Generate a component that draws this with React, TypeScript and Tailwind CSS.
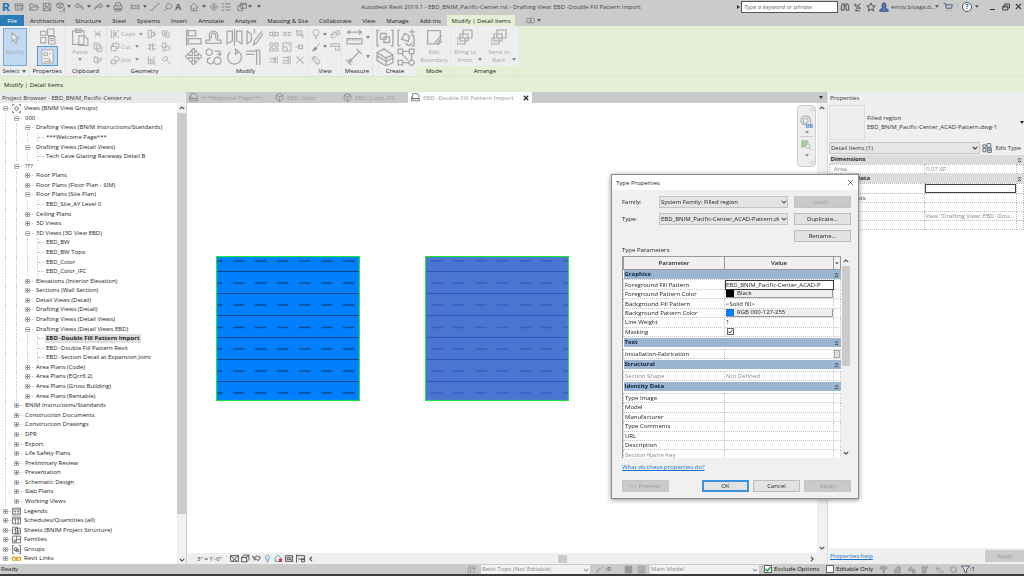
import React from "react";

type IconProps = {
  d: string;
  fill?: string;
  className?: string;
  sw?: number;
  extra?: React.ReactNode;
};

const Icon = ({ d, fill = "none", className = "h-[10px] w-[10px]", sw = 1.4, extra }: IconProps) => (
  <svg viewBox="0 0 16 16" fill={fill} stroke="currentColor" strokeWidth={sw} className={`shrink-0 ${className}`} aria-hidden="true">
    <path d={d} />
    {extra}
  </svg>
);

const Caret = ({ className = "text-[#666]" }: { className?: string }) => (
  <svg viewBox="0 0 4 3" className={`h-[3px] w-[4px] shrink-0 ${className}`} aria-hidden="true">
    <path d="M0 0h4L2 3z" fill="currentColor" />
  </svg>
);

const Chevron = ({ className = "" }: { className?: string }) => (
  <svg viewBox="0 0 8 8" className={`h-[6px] w-[6px] shrink-0 ${className}`} fill="none" stroke="currentColor" strokeWidth="1.4" aria-hidden="true">
    <path d="M1 2.5l3 3 3-3" />
  </svg>
);

const Collapse = () => (
  <svg viewBox="0 0 6 8" className="h-[6px] w-[5px] shrink-0" fill="none" stroke="#222" strokeWidth="1.2" aria-hidden="true">
    <path d="M1 3.5L3 1.5l2 2M1 7l2-2 2 2" />
  </svg>
);

const paths = {
  recent: "M2 3h12v10H2zM2 5.5h12M6 5.5V13M9 8h4M9 10.5h4",
  open: "M1.5 13V3h4l1.5 2h6v3M1.5 13l3-5h11l-3 5z",
  save: "M2 2h11l1 1v11H2zM5 2v5h6V2M4.500 14V9.500h7V14",
  sync: "M8 1l5 2v5l-5 2-5-2V3zM3 3l5 2 5-2M8 5v5M8 14a3.500 3.500 0 107-2M15 9v3h-3",
  undo: "M6 2L1.500 6 6 10V7.500c4 0 7 .5 8.500 4C14.500 7 11 4.500 6 4.500z",
  redo: "M10 2l4.500 4L10 10V7.500c-4 0-7 .5-8.500 4C1.500 7 5 4.500 10 4.500z",
  print: "M4 6V1.500h8V6M1.500 6h13v6h-13zM4 10h8v4.500H4z",
  dims: "M2 4v8M14 4v8M2 6h12M2 10h12",
  line: "M2.500 13.500L13.500 2.500M1 12l3 3M12 1l3 3",
  tag: "M2 14l4-4M6 10a4.500 4.500 0 118 -3c0 3-3 4-5 4z",
  home: "M1.500 8L8 2l6.500 6M3.500 7v7h9V7M7 14v-4h3",
  section: "M8 2l6 6-6 6-6-6zM8 5v6M5 8h6",
  list: "M1 3h4M7 3h8M1 8h4M7 8h8M1 13h4M7 13h8",
  windows: "M5 2h10v8H5zM1.500 6H9v8H1.500zM5 4h10",
  binoc: "M2 8l1.500-5h3V13H2zM14 8l-1.500-5h-3V13H14zM6.500 6h3",
  dish: "M3 3c0 5 4 8 9 7zM8 7l4-5M6 10l-2 4h7",
  star: "M8 1.500l2 4.500 4.800.4-3.700 3.200 1.200 4.800L8 11.800l-4.300 2.600 1.200-4.800L1.200 6.400 6 6z",
  cart: "M1 2h2.500l2 8h8L15 4.500H4.500M6 13.500h1M12 13.500h1",
  cut: "M2 3l11 10M13 3L2 13M3 8h9",
  copy: "M2 2h7l2 2v7H2zM6 5h5l3 3v7H6z",
  match: "M2 3h5v9H2zM8 6h6M8 9h4M7 14l8-9",
  cope: "M2 1v14M6 1v14M14 2L7 8l7 6M9 5v6",
  cutGeo: "M2 7h8v7H2zM5 7V2h9v8h-4M2 7l3-5",
  join: "M2 8h7v6H2zM6 5a4.500 4.500 0 118 4l-5 2",
  wallJoin: "M2 2h5v12H2zM7 5h4l3 3-3 3H7M11 5v6",
  split: "M2 3h6l5 3v7H7L2 9zM5 6h4v4H5z",
  beam: "M5 2v12M9 2v12M1 5h13M1 10h4M9 11h6",
  unjoin: "M2 2h6v6H2zM7 10a3.500 3.500 0 117 0 3.500 3.500 0 01-7 0M3 8v6h4",
  paint: "M2 2v12h12M5 10l8-8M5 5v6h8M8 11l5-5",
  demolish: "M2 7l5-5 4 3-5 5zM8 7l7 7",
  align: "M1.500 0v16M3 1.500h7v5H3zM3 9h12v5H3z",
  offset: "M1 13.500h14v-3h-3.500L12 6a4 4 0 00-8 0l.5 4.500H1zM6 9V6a2 2 0 014 0v3",
  mirror: "M1 2v12l5-3V2zM15 2v12l-5-3V2zM8 0v16",
  mirrorDraw: "M1 2v12l4-3V5zM15 2l-7 9-1 4 3-2 6-9M8 0v4",
  move: "M8 0l3 3.500H9V7h3.500V5L16 8l-3.500 3V9H9v3.500h2L8 16l-3-3.500h2V9H3.500v2L0 8l3.500-3v2H7V3.500H5z",
  copyTool: "M1 4a3 3 0 116 0 3 3 0 01-6 0M8.500 12a3.300 3.300 0 116.600 0 3.300 3.300 0 01-6.600 0M9 3h5v3M12 5l2 2 1.500-2M5 9a3 3 0 103 4",
  rotate: "M4 3.500A6.500 6.500 0 1012 3.500M12 3.500L9 1v5z",
  trim: "M0 3h10v4M0 6h8M13 2v14M10 6v10M13 2H9",
  splitEl: "M1 5.500h5v5H1zM10 5.500h5v5h-5zM8 3v10",
  gap: "M1 6h5M1 10h5M10 6h5M10 10h5M6 4v8M10 4v8",
  pinOff: "M2 2l12 12M3 3h8v7H3zM10 14l5-5",
  array: "M1.500 1.500h5v5h-5zM9.500 1.500h5v5h-5zM1.500 9.500h5v5h-5zM9.500 9.500h5v5h-5z",
  scale: "M1.500 1.500h13v13h-13zM1.500 8H8v6.500M10 6l3-3",
  pin: "M2 8h4M6 4v8M6 5.500h6v5H6zM12 4v8",
  trimOne: "M1 6h9M1 11h9M13 2v12M10 4v9M7 4l3 2-3 2",
  trimMulti: "M1 4h9M1 9h9M1 13h8M13 1v14M10 2v13",
  del: "M2 3l12 10M14 3L2 13M4 2l9 12",
  bulb: "M8 1a4.500 4.500 0 00-3 8v2h6V9a4.500 4.500 0 00-3-8M6 13h4M6.500 15h3",
  hide: "M2 9l3-4h5l-3 4zM2 9v5h5l4-4V5M10 3h5v6h-4",
  brush: "M14 2L8 9M8 8l2 2-4 4H2l3-4z",
  linework: "M1 3h14v4H1zM9 9v5l3-2 3 2V7",
  cubes: "M2 4l4-2 8 7v4l-4 2-8-7zM2 4l8 7v4M6 2v3",
  ruler: "M1 3h14M1 3l3-2M1 3l3 2M15 3l-3-2M15 3l-3 2M1 9h14v5H1zM3 9v2M6 9v2M9 9v2M12 9v2",
  diagonal: "M3 13L13 3M0 11l5 5M10 1l5 5M2 14l2-4M2 14l4-2",
  group: "M3 1H1v14h2M13 1h2v14h-2M4 4h5v5H4zM7 7h5v5H7z",
  similar: "M3 1H1v14h2M13 6h2v9h-2M4 9l3-5 4 2-1 5zM8 12a2.500 2.500 0 105 0M11 2.500h5M13.500 0v5",
  assembly: "M1 4l6-3 8 5-6 3zM1 4v7l8 5V9M15 6v7l-6 3M1 7l8 5 6-3",
  parts: "M1 1h4v4H1zM11 1h4v4h-4zM1 11h4v4H1zM5 3h6M13 5v5M5 13h5M13 10l3 3-3 3-3-3zM4 5l6 6",
  boundary: "M1.500 1.500h12V10l-3 4h-9zM8 13l7-7M11 15l4-4",
  arrange: "M6 1h9v8H6zM3 5h8v7H3zM0 9h8v6H0z",
  panelGrid: "M1.500 3h5v4h-5zM8 1h6v6H8zM1.500 9h5v5h-5zM9 8h6v7H9zM10 10h4M10 12h4",
  propSheet: "M2 1h12v14H2zM4 4h4v3H4zM9.500 5H12M4 10h4M10 9v5M4 13h8",
  paste: "M1.500 2.500h10v12h-10zM4 1h5v3H4zM7 7h5l3 3v5.500H7z",
  sheet: "M3 1h9l2 3v6H1V6M1 10h14v4H1zM3 1v9",
  cube: "M8 1l6 3v7l-6 4-6-4V4zM2 4l6 3 6-3M8 7v8",
};

const QAT: { icon: keyof typeof paths; slot: string; caret?: boolean }[] = [
  { icon: "recent", slot: "w-[14px]" },
  { icon: "open", slot: "w-[12px]" },
  { icon: "save", slot: "w-[12px]" },
  { icon: "sync", slot: "w-[19px]", caret: true },
  { icon: "undo", slot: "w-[20px]", caret: true },
  { icon: "redo", slot: "w-[19px]", caret: true },
  { icon: "print", slot: "w-[16px]" },
  { icon: "dims", slot: "w-[20px]", caret: true },
  { icon: "line", slot: "w-[12px]" },
  { icon: "tag", slot: "w-[11px]" },
];

const TitleBar = () => (
  <header className="flex h-[13px] shrink-0 items-center bg-[#cbcbcb] text-[#7c7c7c]">
    <div className="flex w-[265px] shrink-0 items-center">
      <span className="w-[14px] pl-[2px] font-['Lato'] text-[12px] leading-[12px] font-black text-[#1f6fb0]">R</span>
      {QAT.map((q) => (
        <span key={q.icon} className={`flex shrink-0 items-center justify-between pr-[3px] ${q.slot} ${q.caret ? "" : "mr-[1px]"}`}>
          <Icon d={paths[q.icon]} />
          {q.caret && <Caret />}
        </span>
      ))}
      <span className="w-[14px] text-[9px] leading-[10px] font-bold text-[#666]">A</span>
      <span className="flex w-[20px] items-center justify-between pr-[3px]"><Icon d={paths.home} /><Caret /></span>
      <span className="w-[12px]"><Icon d={paths.section} /></span>
      <span className="w-[16px]"><Icon d={paths.list} /></span>
      <span className="flex w-[20px] items-center justify-between pr-[5px]"><Icon d={paths.windows} /><Caret /></span>
      <Caret />
    </div>
    <h1 className="flex-1 text-center whitespace-nowrap text-[#444]">
      Autodesk Revit 2019.1 - EBD_BNIM_Pacific-Center.rvt - Drafting View: EBD -Double Fill Pattern Import
    </h1>
    <div className="flex w-[287px] shrink-0 items-center text-[#444]">
      <svg viewBox="0 0 3 4" className="mr-[1px] h-[4px] w-[3px]" aria-hidden="true"><path d="M0 0l3 2-3 2z" fill="#333" /></svg>
      <input
        aria-label="Search"
        placeholder="Type a keyword or phrase"
        className="h-[12px] w-[97px] border border-[#555] bg-white px-[2px] italic placeholder:text-[#666]"
      />
      <Icon d={paths.binoc} className="ml-[2px] h-[10px] w-[10px]" />
      <Icon d={paths.dish} className="ml-[3px] h-[10px] w-[10px]" />
      <Icon d={paths.star} className="ml-[3px] h-[10px] w-[10px]" />
      <svg viewBox="0 0 16 16" className="ml-[3px] h-[10px] w-[10px] shrink-0" fill="#4f74b8" stroke="#2c4270" aria-hidden="true">
        <path d="M1 15c0-4 3-5 5-5.500C4 8 4 1 8 1s4 7 2 8.500c2 .5 5 1.500 5 5.500z" />
      </svg>
      <button className="ml-[2px] flex w-[50px] items-center whitespace-nowrap">emily.bisaga.d...<Caret /></button>
      <Icon d={paths.cart} className="ml-[2px] h-[10px] w-[10px] text-[#3c5578]" />
      <span className="ml-[4px] h-[9px] border-l border-[#bbb]" />
      <span className="ml-[4px] flex h-[10px] w-[10px] items-center justify-center rounded-full border border-[#456] bg-white text-[7px] leading-[8px] font-bold text-[#2a62b0]">?</span>
      <span className="ml-[3px]"><Caret /></span>
      <button aria-label="Minimize" className="mt-[5px] ml-[11px] h-[1px] w-[5px] bg-[#333]" />
      <button aria-label="Restore" className="ml-[7px]"><Icon d="M5 5V2h10v8h-3M1.500 6h10v8h-10zM1.500 8h10" sw={2} className="h-[8px] w-[8px]" /></button>
      <button aria-label="Close" className="ml-[5px]"><Icon d="M2 2l12 12M14 2L2 14" sw={3} className="h-[7px] w-[7px]" /></button>
    </div>
  </header>
);

const MENU = ["Architecture", "Structure", "Steel", "Systems", "Insert", "Annotate", "Analyze", "Massing & Site", "Collaborate", "View", "Manage", "Add-Ins"];

const Tabs = () => (
  <nav className="flex h-[13px] shrink-0 items-stretch bg-[#cbcbcb] pt-[2px] text-[#222]">
    <button className="w-[24px] bg-[#2a7db5] text-white">File</button>
    <div className="flex w-[423px] items-center justify-between pr-[6px] pl-[6px] whitespace-nowrap">
      {MENU.map((m) => (
        <button key={m}>{m}</button>
      ))}
    </div>
    <button className="w-[68px] bg-[#e4efd6] whitespace-nowrap">Modify | Detail Items</button>
    <button aria-label="Minimize ribbon" className="ml-[11px] flex items-center gap-[2px] text-[#777]">
      <Icon d="M3 4h10a2 2 0 012 2v4a2 2 0 01-2 2H3a2 2 0 01-2-2V6a2 2 0 012-2zM6 9l2-3 2 3z" className="h-[9px] w-[9px]" />
      <Caret />
    </button>
  </nav>
);

const Panel = ({ label, className, green, children }: { label: React.ReactNode; className: string; green?: boolean; children: React.ReactNode }) => (
  <section className={`flex h-[50px] shrink-0 flex-col border-r border-[#e3ebd8] bg-[#eeeeee] ${className}`}>
    <div className="flex h-[40px] pt-[2px] text-[#a8a8a8]">{children}</div>
    <div className={`flex h-[10px] items-center justify-center gap-[3px] whitespace-nowrap text-[#222] ${green ? "bg-[#e4efd6]" : ""}`}>{label}</div>
  </section>
);

const SmallRows = ({ cols, icons, className }: { cols: string; icons: (keyof typeof paths)[]; className: string }) => (
  <div className={`grid h-[38px] grid-rows-3 items-center ${cols} ${className}`}>
    {icons.map((k) => (
      <button key={k} aria-label={k}><Icon d={paths[k]} /></button>
    ))}
  </div>
);

const Ribbon = () => (
  <div className="flex shrink-0 bg-[#e4efd6] text-[#333]">
    <Panel label={<>Select <Caret /></>} className="w-[30px]">
      <button className="ml-[3px] flex w-[24px] flex-col items-center border border-[#79a7d8] bg-[#c2daf1] pt-[3px]">
        <Icon d="M4 1v12l3-3 2 5 2-1-2-5h4z" fill="#f4f4f4" className="h-[12px] w-[12px]" />
        <span className="pt-[4px]">Modify</span>
      </button>
    </Panel>
    <Panel label="Properties" className="w-[35px]">
      <div className="flex w-full flex-col items-center">
        <Icon d={paths.panelGrid} sw={1} className="mb-[1px] h-[17px] w-[17px]" />
        <button aria-label="Properties" className="flex h-[20px] w-[21px] items-center justify-center border border-[#5e97d0] bg-[#c2daf1]">
          <Icon d={paths.propSheet} sw={1} fill="#f2f2f2" className="h-[15px] w-[15px]" />
        </button>
      </div>
    </Panel>
    <Panel label="Clipboard" className="w-[42px]">
      <button className="flex w-[28px] flex-col items-center pl-[2px]">
        <Icon d={paths.paste} sw={1} className="h-[18px] w-[18px]" />
        <span className="py-[2px]">Paste</span>
        <Caret className="text-[#999]" />
      </button>
      <SmallRows cols="grid-cols-1" icons={["cut", "copy", "match"]} className="w-[10px]" />
    </Panel>
    <Panel label="Geometry" className="w-[76px]">
      <div className="grid h-[38px] w-[37px] grid-rows-3 items-center pl-[3px]">
        {(["cope", "cutGeo", "join"] as const).map((k, i) => (
          <button key={k} className="flex items-center gap-[1px]">
            <Icon d={paths[k]} />
            <span className="pr-[3px]">{["Cope", "Cut", "Join"][i]}</span>
            <Caret className="text-[#999]" />
          </button>
        ))}
      </div>
      <SmallRows cols="grid-cols-2" icons={["wallJoin", "split", "beam", "unjoin", "paint", "demolish"]} className="ml-[3px] w-[27px]" />
    </Panel>
    <Panel label="Modify" className="w-[126px]">
      <div className="grid w-[83px] grid-cols-4 grid-rows-2 pl-[2px]">
        {(["align", "offset", "mirror", "mirrorDraw", "move", "copyTool", "rotate", "trim"] as const).map((k) => (
          <button key={k} aria-label={k}><Icon d={paths[k]} sw={1.2} className="h-[17px] w-[17px]" /></button>
        ))}
      </div>
      <SmallRows cols="grid-cols-3" icons={["splitEl", "gap", "pinOff", "array", "scale", "pin", "trimOne", "trimMulti", "del"]} className="ml-[3px] w-[39px]" />
    </Panel>
    <Panel label="View" className="w-[33px]">
      <div className="grid h-[38px] w-full grid-cols-2 grid-rows-3 items-center pl-[2px]">
        <button className="flex items-center gap-[2px]"><Icon d={paths.bulb} /><Caret className="text-[#888]" /></button>
        <Icon d={paths.hide} className="ml-[4px] h-[10px] w-[10px]" />
        <button className="flex items-center gap-[2px]"><Icon d={paths.brush} fill="#888" /><Caret className="text-[#888]" /></button>
        <Icon d={paths.linework} className="ml-[4px] h-[10px] w-[10px]" />
        <Icon d={paths.cubes} />
      </div>
    </Panel>
    <Panel label="Measure" className="w-[31px]">
      <div className="flex w-full flex-col justify-around pl-[4px]">
        <button className="flex items-center gap-[3px]"><Icon d={paths.ruler} sw={1.2} className="h-[17px] w-[17px]" /><Caret className="text-[#888]" /></button>
        <button className="flex items-center gap-[3px]"><Icon d={paths.diagonal} sw={1.2} className="h-[17px] w-[17px]" /><Caret className="text-[#888]" /></button>
      </div>
    </Panel>
    <Panel label="Create" className="w-[45px]">
      <div className="grid w-full grid-cols-2 grid-rows-2 pl-[3px]">
        {(["group", "similar", "assembly", "parts"] as const).map((k) => (
          <button key={k} aria-label={k}><Icon d={paths[k]} sw={1.2} className="h-[18px] w-[18px]" /></button>
        ))}
      </div>
    </Panel>
    <Panel label="Mode" green className="w-[33px]">
      <button className="flex w-full flex-col items-center leading-[8px]">
        <Icon d={paths.boundary} sw={1.2} className="mt-[1px] mb-[2px] h-[17px] w-[17px]" />
        <span>Edit</span>
        <span>Boundary</span>
      </button>
    </Panel>
    <Panel label="Arrange" green className="w-[69px]">
      {["Bring to,Front", "Send to,Back"].map((t) => (
        <button key={t} className="flex w-[34px] items-start justify-center gap-[2px] pt-[1px] leading-[8px]">
          <span className="flex flex-col items-center">
            <Icon d={paths.arrange} sw={1.2} fill="#ededed" className="mb-[3px] h-[16px] w-[16px]" />
            <span className="whitespace-nowrap">{t.split(",")[0]}</span>
            <span>{t.split(",")[1]}</span>
          </span>
          <span className="self-end pb-[5px]"><Caret className="text-[#888]" /></span>
        </button>
      ))}
    </Panel>
  </div>
);

// depth, state (+ collapsed, - expanded, . leaf), label
const TREE: [number, string, string][] = [
  [0, "-", "Views (BNIM View Groups)"],
  [1, "-", "000"],
  [2, "-", "Drafting Views (BNIM Instructions/Standards)"],
  [3, ".", "***Welcome Page***"],
  [2, "-", "Drafting Views (Detail Views)"],
  [3, ".", "Tech Cave Glazing Raceway Detail B"],
  [1, "-", "???"],
  [2, "+", "Floor Plans"],
  [2, "+", "Floor Plans (Floor Plan - SIM)"],
  [2, "-", "Floor Plans (Site Plan)"],
  [3, ".", "EBD_Site_AY Level 0"],
  [2, "+", "Ceiling Plans"],
  [2, "+", "3D Views"],
  [2, "-", "3D Views (3D View EBD)"],
  [3, ".", "EBD_BW"],
  [3, ".", "EBD_BW Topo"],
  [3, ".", "EBD_Color"],
  [3, ".", "EBD_Color_IFC"],
  [2, "+", "Elevations (Interior Elevation)"],
  [2, "+", "Sections (Wall Section)"],
  [2, "+", "Detail Views (Detail)"],
  [2, "+", "Drafting Views (Detail)"],
  [2, "+", "Drafting Views (Detail Views)"],
  [2, "-", "Drafting Views (Detail Views EBD)"],
  [3, ".", "EBD -Double Fill Pattern Import"],
  [3, ".", "EBD -Double Fill Pattern Revit"],
  [3, ".", "EBD -Section Detail at Expansion Joint"],
  [2, "+", "Area Plans (Code)"],
  [2, "+", "Area Plans (EQcr8.2)"],
  [2, "+", "Area Plans (Gross Building)"],
  [2, "+", "Area Plans (Rentable)"],
  [1, "+", "BNIM Instructions/Standards"],
  [1, "+", "Construction Documents"],
  [1, "+", "Construction Drawings"],
  [1, "+", "DPR"],
  [1, "+", "Export"],
  [1, "+", "Life Safety Plans"],
  [1, "+", "Preliminary Review"],
  [1, "+", "Presentation"],
  [1, "+", "Schematic Design"],
  [1, "+", "Slab Plans"],
  [1, "+", "Working Views"],
  [0, "+", "Legends"],
  [0, "+", "Schedules/Quantities (all)"],
  [0, "+", "Sheets (BNIM Project Structure)"],
  [0, "+", "Families"],
  [0, "+", "Groups"],
  [0, "+", "Revit Links"],
];

const rootIcons: Record<string, string> = {
  "Views (BNIM View Groups)": "M4 1H1v3M12 1h3v3M4 15H1v-3M12 15h3v-3M5 6l3-2 3 2v4l-3 2-3-2z",
  Legends: "M1 2h14v12H1zM1 5h14M3 8h4M3 11h4M9 8h4M9 11h4",
  "Schedules/Quantities (all)": "M1 2h14v12H1zM1 5h14M6 5v9M11 5v9",
  "Sheets (BNIM Project Structure)": "M1 2h9v12H1zM6 4h9v10H6zM3 6h3M8 8h5M8 11h5",
  Families: "M1 2h14v12H1zM8 2v6h7M4 9h4v3H4z",
  Groups: "M4 1H1v14h3M12 1h3v14h-3M4 5h5v5H4zM7 8h5v4H7z",
};

const ProjectBrowser = () => (
  <aside className="flex w-[187px] shrink-0 flex-col border-r border-[#cfcfcf] bg-white">
    <h2 className="h-[11px] shrink-0 bg-[#eaeaea] pl-[2px] leading-[12px] text-[#333]">Project Browser - EBD_BNIM_Pacific-Center.rvt</h2>
    <div className="flex min-h-0 flex-1">
      <ul className="flex flex-1 flex-col overflow-hidden pt-[1px]">
        {TREE.map(([depth, state, label], i) => (
          <li key={i} className="flex min-h-0 flex-1 items-center whitespace-nowrap text-[#222]">
            {Array.from({ length: depth }, (_, n) => (
              <span key={n} className="w-[11px] self-stretch pl-[5px]">
                <span className="block h-full border-l border-dotted border-[#ccc]" />
              </span>
            ))}
            {state === "." ? (
              <span className="flex w-[11px] items-center self-stretch pl-[4px]">
                <span className="h-full border-l border-dotted border-[#ccc]" />
                <span className="w-[6px] border-t border-dotted border-[#bbb]" />
              </span>
            ) : (
              <span className="flex w-[11px] items-center pl-[3px]">
                <svg viewBox="0 0 5 5" className="h-[5px] w-[5px] shrink-0" aria-hidden="true">
                  <path d="M.5 .5h4v4h-4z" fill="#fff" stroke="#b5b5b5" />
                  <path d={state === "+" ? "M1 2.500h3M2.500 1v3" : "M1 2.500h3"} stroke="#71869d" />
                </svg>
                <span className="w-[3px] border-t border-dotted border-[#bbb]" />
              </span>
            )}
            {depth === 0 ? (
              label === "Revit Links" ? (
                <Icon d="M1 6h6v5H1zM9 6h6v5H9zM5 8.500h6" sw={2} className="mr-[2px] ml-[1px] h-[9px] w-[9px] text-[#d9a429]" />
              ) : (
                <Icon d={rootIcons[label]} className="mr-[2px] ml-[1px] h-[9px] w-[9px] text-[#555]" />
              )
            ) : (
              <span className={depth === 3 ? "w-[1px]" : "w-[2px]"} />
            )}
            <span className={i === 24 ? "bg-[#dedede] px-[1px] leading-[9px] font-bold" : "px-[1px] leading-[9px]"}>{label}</span>
          </li>
        ))}
      </ul>
      <div className="flex w-[9px] flex-col items-center justify-between bg-[#f0f0f0] text-[#444]">
        <Chevron className="my-[2px] rotate-180" />
        <div className="mb-auto h-[87%] w-full bg-[#cbcbcb]" />
        <Chevron className="my-[1px]" />
      </div>
    </div>
  </aside>
);

type RegionProps = { fill: string; ink: string; dash: string; shift: number };

const FilledRegion = ({ fill, ink, dash, shift }: RegionProps) => (
  <svg viewBox="0 0 144 145" className="h-[145px] w-[144px] shrink-0" aria-hidden="true">
    <rect width="144" height="145" fill={fill} />
    {[15.5, 37.5, 59.5, 81.5, 103.5, 125.500].map((y) => (
      <path key={y} d={`M0 ${y}h144`} stroke={ink} />
    ))}
    {[5, 27, 49, 71.5, 93, 115, 137].map((y) => (
      <path key={y} d={`M${shift} ${y}H144`} stroke={dash} strokeWidth="1.3" strokeDasharray="11.500 10.500" />
    ))}
    <rect x=".5" y=".5" width="143" height="144" fill="none" stroke="#1ee63c" strokeWidth="1.2" />
  </svg>
);

const VIEW_TABS: { icon: keyof typeof paths; label: string; w: string }[] = [
  { icon: "sheet", label: "***Welcome Page***", w: "w-[86px]" },
  { icon: "cube", label: "EBD_Color", w: "w-[68px]" },
  { icon: "cube", label: "EBD_Color_IFC", w: "w-[67px]" },
];

const DrawingArea = () => (
  <main className="flex min-w-0 flex-1 flex-col bg-white">
    <div className="flex h-[11px] shrink-0 items-center bg-[#c9c9c9] text-[#9e9e9e]">
      {VIEW_TABS.map((t) => (
        <button key={t.label} className={`flex items-center gap-[3px] pl-[2px] whitespace-nowrap ${t.w}`}>
          <Icon d={paths[t.icon]} className="h-[9px] w-[9px] text-[#888]" />
          {t.label}
        </button>
      ))}
      <button className="flex h-full w-[124px] items-center gap-[3px] bg-white pl-[3px] font-semibold whitespace-nowrap text-[#b0b0b0]">
        <Icon d={paths.sheet} className="h-[9px] w-[9px] text-[#666]" />
        EBD -Double Fill Pattern Import
        <Icon d="M2 2l12 12M14 2L2 14" sw={3} className="mr-[3px] ml-auto h-[6px] w-[6px] text-[#222]" />
      </button>
      <span className="mr-[4px] ml-auto"><Caret className="text-[#333]" /></span>
    </div>
    <div className="flex min-h-0 flex-1">
      <div className="relative flex flex-1 items-start gap-[65px] pt-[153px] pl-[29px]">
        <FilledRegion fill="#0080ff" ink="#07468a" dash="#0a4c94" shift={-5} />
        <FilledRegion fill="#4a75d1" ink="#2a58c2" dash="#345fc8" shift={6} />
        <div className="absolute top-[2px] right-[1px] flex h-[62px] w-[19px] flex-col items-center justify-between rounded-[4px] border border-[#cfcfcf] bg-[#ededed] py-[1px] text-[#aaa]">
          <Icon d="M3 8a5 5 0 1010 0 5 5 0 10-10 0" className="ml-auto h-[5px] w-[5px]" />
          <Icon
            d="M1 7a6 6 0 1112 0v5H7a6 6 0 01-6-5M4 7a3 3 0 106 0 3 3 0 10-6 0"
            className="h-[13px] w-[13px] text-[#a9b2bb]"
            extra={<path d="M8 12h3v3H8zM13 12h2v3h-2z" stroke="#5f9ad0" />}
          />
          <Caret className="text-[#999]" />
          <span className="w-[13px] border-t border-[#ccc]" />
          <Icon d="M1 1h9v9H1z" fill="#a5cf98" sw={1} className="h-[11px] w-[11px]" extra={<path d="M7 9a3 3 0 106 0 3 3 0 10-6 0M12 11l3 4" fill="#eee" />} />
          <Caret className="text-[#999]" />
          <Icon d="M3 8a5 5 0 1010 0 5 5 0 10-10 0" className="ml-auto h-[5px] w-[5px]" />
        </div>
      </div>
      <div className="flex w-[10px] flex-col items-center justify-between bg-[#f0f0f0] py-[2px] text-[#444]">
        <Chevron className="rotate-180" />
        <Chevron />
      </div>
    </div>
    <div className="flex h-[11px] shrink-0 items-center bg-[#efefef] text-[#333]">
      <span className="w-[43px] pl-[10px] whitespace-nowrap">3" = 1'-0"</span>
      <div className="flex items-center gap-[2px]">
        <Icon d="M1 3h14v10H1zM1 3l7 6 7-6M4 13l4-4 4 4" className="h-[9px] w-[9px]" />
        <Icon d="M1 6h9v8H1zM1 6l4-4h9v8l-4 4M10 6l4-4" className="h-[9px] w-[9px]" />
        <Icon d="M1 4l4 3 3-4 7 3-4 6-4-4-2 3z" className="h-[9px] w-[9px]" />
        <Icon d="M8 2a4 4 0 00-2 7v2h4V9a4 4 0 00-2-7M6 14h4" className="h-[9px] w-[9px] text-[#3d8fd8]" />
        <Icon d="M2 7l5-5 5 5v6H2z" className="h-[9px] w-[9px] text-[#2f89a8]" extra={<path d="M9 9l5 5M14 9l-5 5" stroke="#d22" strokeWidth="2.500" />} />
        <Icon d="M1 3h12v10H1zM4 6h5v4H4zM9 8l6 6M12 5h3" className="h-[9px] w-[9px]" />
        <Icon d="M1 3h14v6H4M1 1v14M10 9h5v5h-5z" className="h-[9px] w-[9px]" />
      </div>
      <Chevron className="ml-[3px] rotate-90" />
      <div className="ml-[244px] h-[8px] w-[9px] bg-[#cbcbcb]" />
      <Chevron className="mr-[12px] ml-auto -rotate-90" />
    </div>
  </main>
);

const GroupRow = ({ label, span, className, first }: { label: string; span: number; className: string; first?: boolean }) => (
  <tr className={first ? "h-[9px]" : "h-[12px]"}>
    <th colSpan={span} className="p-0 text-left font-bold">
      <span className={`flex h-[9px] items-center justify-between pr-[2px] pl-[1px] leading-[9px] ${className}`}>
        {label}
        <Collapse />
      </span>
    </th>
  </tr>
);

const PROP_ROWS = ["Image", "Comments", "Mark", "", ""];

const PropertiesPalette = () => (
  <aside className="flex w-[197px] shrink-0 flex-col border-l border-[#d8d8d8] bg-white pl-[1px]">
    <div className="bg-[#efefef]">
      <h2 className="h-[11px] pl-[1px] leading-[12px] text-[#333]">Properties</h2>
      <div className="flex h-[39px] items-center text-[#333]">
        <div className="h-[35px] w-[36px] shrink-0 border border-[#dcdcdc]" />
        <div className="flex-1 pl-[2px] leading-[9px] whitespace-nowrap">
          Filled region
          <br />
          EBD_BNIM_Pacific-Center_ACAD-Pattern.dwg-1
        </div>
        <Caret className="text-[#222]" />
      </div>
      <div className="flex h-[13px] items-center justify-between pb-[1px] text-[#333]">
        <div className="relative w-[151px]">
          <select aria-label="Selected elements" className="block h-[12px] w-full appearance-none border border-[#c6c6c6] bg-[#e6e6e6] px-[1px] py-0">
            <option>Detail Items (1)</option>
          </select>
          <Chevron className="pointer-events-none absolute top-[3px] right-[2px]" />
        </div>
        <button className="flex items-center gap-[3px] pr-[3px] whitespace-nowrap">
          <Icon d={paths.panelGrid} className="h-[10px] w-[10px] text-[#567]" />
          Edit Type
        </button>
      </div>
    </div>
    <table className="w-full table-fixed border-collapse leading-[8px] text-[#333] [&_td]:border [&_td]:border-dotted [&_td]:border-[#bbb]">
      <colgroup>
        <col className="w-[95px]" />
        <col />
        <col className="w-[7px]" />
      </colgroup>
      <tbody>
        <GroupRow first label="Dimensions" span={3} className="bg-[#dcdcdc]" />
        <tr className="h-[9px] text-[#888]">
          <td className="p-0 pl-[4px]">Area</td>
          <td className="p-0 pl-[1px]">0.07 SF</td>
          <td className="p-0" />
        </tr>
        <GroupRow first label="Identity Data" span={3} className="bg-[#dcdcdc]" />
        {PROP_ROWS.map((p, i) => (
          <tr key={i} className={i === 0 ? "h-[10px]" : "h-[9px]"}>
            <td className="p-0 pl-[5px]">{p}</td>
            <td className="overflow-hidden p-0 whitespace-nowrap text-[#888]">
              {i === 0 ? (
                <input aria-label="Image" className="block h-[9px] w-full border border-[#444] bg-white" />
              ) : i === 3 ? (
                'View "Drafting View: EBD -Dou...'
              ) : null}
            </td>
            <td className="p-0" />
          </tr>
        ))}
      </tbody>
    </table>
    <div className="mt-auto flex h-[16px] items-center justify-between bg-[#efefef] pl-[1px]">
      <a href="#help" className="text-[#1a6fd0] underline">Properties help</a>
      <button disabled className="h-[12px] w-[39px] bg-[#cbcbcb] text-[#999]">Apply</button>
    </div>
  </aside>
);

type Param = { name: string; value?: React.ReactNode; muted?: boolean };

const swatchButton = (color: string, label: string) => (
  <button className="flex h-[8px] w-full items-center gap-[3px] border-r border-b border-[#999] bg-[#eee] text-left leading-[7px]">
    <span className={`h-[7px] w-[8px] ${color}`} />
    {label}
  </button>
);

const GROUPS: { label: string; rows: Param[] }[] = [
  {
    label: "Graphics",
    rows: [
      {
        name: "Foreground Fill Pattern",
        value: <input aria-label="Foreground Fill Pattern" defaultValue="EBD_BNIM_Pacific-Center_ACAD-P" className="block h-[8px] w-full bg-white leading-[7px] outline outline-[#333]" />,
      },
      { name: "Foreground Pattern Color", value: swatchButton("bg-black", "Black") },
      { name: "Background Fill Pattern", value: "<Solid fill>" },
      { name: "Background Pattern Color", value: swatchButton("bg-[#007fff]", "RGB 000-127-255") },
      { name: "Line Weight", value: "1" },
      {
        name: "Masking",
        value: (
          <span className="relative block h-[8px]">
            <input type="checkbox" aria-label="Masking" defaultChecked className="ml-[1px] block h-[7px] w-[7px] appearance-none border border-[#666] bg-white" />
            <svg viewBox="0 0 7 7" className="pointer-events-none absolute top-0 left-[1px] h-[7px] w-[7px]" fill="none" stroke="#333" aria-hidden="true"><path d="M1.500 3.500L3 5l2.500-3" /></svg>
          </span>
        ),
      },
    ],
  },
  { label: "Text", rows: [{ name: "Installation-Fabrication" }] },
  { label: "Structural", rows: [{ name: "Section Shape", value: "Not Defined", muted: true }] },
  {
    label: "Identity Data",
    rows: [
      { name: "Type Image" },
      { name: "Model" },
      { name: "Manufacturer" },
      { name: "Type Comments" },
      { name: "URL" },
      { name: "Description" },
      { name: "Section Name Key", muted: true },
    ],
  },
];

const DialogSelect = ({ id, value }: { id: string; value: string }) => (
  <div className="relative w-[129px]">
    <select id={id} className="block h-[12px] w-full appearance-none border border-[#c4c4c4] bg-[#e4e4e4] py-0 pr-[8px] pl-[1px] text-[#222]">
      <option>{value}</option>
    </select>
    <Chevron className="pointer-events-none absolute top-[3px] right-[1px] text-[#555]" />
  </div>
);

const dialogButton = "h-[12px] border border-[#bdbdbd] bg-[#e2e2e2] text-[#222]";
const disabledButton = "h-[12px] border border-[#c4c4c4] bg-[#cacaca] text-[#9a9a9a]";

const TypeProperties = () => (
  <div role="dialog" aria-label="Type Properties" className="fixed top-[174px] left-[611px] flex w-[248px] flex-col border border-[#8c8c8c] bg-[#f0f0f0] shadow-[0_1px_5px_rgba(0,0,0,0.45)]">
    <div className="flex h-[15px] items-center justify-between bg-white pr-[4px] pl-[4px] text-[#222]">
      Type Properties
      <button aria-label="Close dialog"><Icon d="M2 2l12 12M14 2L2 14" className="h-[7px] w-[7px]" /></button>
    </div>
    <div className="pt-[6px] pr-[7px] pb-[6px] pl-[10px] text-[#222]">
      <div className="grid grid-cols-[37px_129px_1fr] gap-y-[5px]">
        <label htmlFor="family" className="leading-[12px]">Family:</label>
        <DialogSelect id="family" value="System Family: Filled region" />
        <button disabled className={`${disabledButton} ml-[6px]`}>Load...</button>
        <label htmlFor="type" className="leading-[12px]">Type:</label>
        <DialogSelect id="type" value="EBD_BNIM_Pacific-Center_ACAD-Pattern.dwg" />
        <button className={`${dialogButton} ml-[6px]`}>Duplicate...</button>
        <button className={`${dialogButton} col-start-3 ml-[6px]`}>Rename...</button>
      </div>
      <h3 className="mt-[3px] h-[11px] leading-[10px]">Type Parameters</h3>
      <div className="flex h-[202px] border-l border-[#999]">
        <div className="w-[218px] overflow-hidden bg-white">
          <table className="h-[204px] w-full table-fixed border-collapse leading-[8px] whitespace-nowrap [&_td]:border [&_td]:border-dotted [&_td]:border-[#c4c4c4]">
            <colgroup>
              <col className="w-[101px]" />
              <col />
              <col className="w-[7px]" />
            </colgroup>
            <thead>
              <tr className="h-[13px] bg-[#f0f0f0]">
                <th className="border border-[#999] p-0 font-semibold">Parameter</th>
                <th className="border border-[#999] p-0 font-semibold">Value</th>
                <th className="border border-[#999] p-0 font-normal">=</th>
              </tr>
            </thead>
            <tbody>
              {GROUPS.map((g, i) => (
                <React.Fragment key={g.label}>
                  <GroupRow label={g.label} first={i === 0} span={3} className="bg-[#9ab4d2] text-[#10202f]" />
                  {g.rows.map((r) => (
                    <tr key={r.name} className={`h-[9px] ${r.muted ? "text-[#888]" : ""}`}>
                      <td className="p-0 pl-[1px]">{r.name}</td>
                      <td className="p-0 pl-[1px]">{r.value}</td>
                      <td className="p-0">{g.label === "Text" && <button aria-label="Browse" className="block h-[8px] w-full border border-[#aaa] bg-[#ddd]" />}</td>
                    </tr>
                  ))}
                </React.Fragment>
              ))}
            </tbody>
          </table>
        </div>
        <div className="flex flex-1 flex-col items-center text-[#444]">
          <Chevron className="my-[2px] rotate-180" />
          <div className="h-[100px] w-[8px] bg-[#cbcbcb]" />
          <Chevron className="mt-auto mb-[2px]" />
        </div>
      </div>
      <a href="#types" className="mt-[5px] block leading-[9px] text-[#1a6fd0] underline">What do these properties do?</a>
      <div className="mt-[8px] flex">
        <button disabled className={`${disabledButton} w-[47px]`}>&lt;&lt; Preview</button>
        <button className="ml-auto h-[12px] w-[47px] border-2 border-[#3c93dc] bg-[#e2e2e2] leading-[8px]">OK</button>
        <button className={`${dialogButton} ml-[4px] w-[47px]`}>Cancel</button>
        <button disabled className={`${disabledButton} ml-[4px] w-[47px]`}>Apply</button>
      </div>
    </div>
  </div>
);

const StatusSelect = ({ label, value }: { label: string; value: string }) => (
  <div className="relative w-[109px]">
    <select aria-label={label} className="block h-[9px] w-full appearance-none bg-[#f2f2f2] px-[1px] py-0 text-[#888]">
      <option>{value}</option>
    </select>
    <Chevron className="pointer-events-none absolute top-[2px] right-[1px] text-[#999]" />
  </div>
);

const StatusCheck = ({ id, label, checked }: { id: string; label: string; checked?: boolean }) => (
  <div className="flex items-center gap-[2px]">
    <span className="relative block">
      <input id={id} type="checkbox" defaultChecked={checked} className="block h-[8px] w-[8px] appearance-none border border-[#666] bg-white" />
      {checked && (
        <svg viewBox="0 0 8 8" className="pointer-events-none absolute top-0 left-0 h-[8px] w-[8px]" fill="none" stroke="#1c9a2e" strokeWidth="1.400" aria-hidden="true"><path d="M1.500 4l2 2L6.500 2" /></svg>
      )}
    </span>
    <label htmlFor={id} className="whitespace-nowrap text-[#111]">{label}</label>
  </div>
);

const StatusBar = () => (
  <footer className="flex h-[12px] shrink-0 items-center border-b-2 border-b-[#3c3c3c] bg-[#cbcbcb] text-[#222]">
    <span className="flex-1 pl-[1px]">Ready</span>
    <div className="flex w-[557px] shrink-0 items-center text-[#999]">
      <Icon d="M2 14V6h4v8zM8 4h6v3H8zM11 7v8M2 3h4" className="mr-[4px] h-[10px] w-[10px]" />
      <StatusSelect label="Workset" value="Revit Topo (Not Editable)" />
      <Icon d="M1 14l5-7h4l5-4M6 7v7" className="ml-[5px] h-[9px] w-[9px]" />
      <span className="w-[20px] pl-[2px] text-[#222]">:0</span>
      <Icon d="M2 2h12v12H2z" fill="#999" className="h-[9px] w-[9px]" />
      <Icon d="M2 2h12v12H2zM5 11l5-5v5z" fill="#b5b5b5" className="mr-[4px] ml-[4px] h-[9px] w-[9px]" />
      <StatusSelect label="Design option" value="Main Model" />
      <div className="ml-[5px] flex w-[62px]"><StatusCheck id="exclude" label="Exclude Options" checked /></div>
      <div className="flex w-[53px]"><StatusCheck id="editable" label="Editable Only" /></div>
      <div className="flex gap-[5px]">
        <Icon d="M2 3h12v4h-4v7H7V7H2z" fill="#aaa" className="h-[9px] w-[9px]" />
        <Icon d="M2 10l6-7h5v11H2z" fill="#aaa" className="h-[9px] w-[9px]" />
        <Icon d="M2 8l5-5 3 5h4v6H9v-4H2z" fill="#aaa" className="h-[9px] w-[9px]" />
        <Icon d="M2 3h11L9 8v6H2z" fill="#aaa" className="h-[9px] w-[9px]" />
        <Icon d="M3 3v8M7 6v8M1 6h9M12 8v7M10 12h5" className="h-[9px] w-[9px]" />
        <Icon d="M3 8a5 5 0 1010 0 5 5 0 10-10 0" sw={2} className="h-[9px] w-[9px]" />
      </div>
      <Icon d="M1 2h14l-5 6v6l-4-2V8z" fill="#dfe9f3" className="ml-[3px] h-[9px] w-[9px] text-[#345]" />
      <span className="text-[#222]">:1</span>
    </div>
  </footer>
);

export default function App() {
  return (
    <div className="flex h-screen flex-col overflow-hidden bg-[#e4efd6] font-['Open_Sans','Noto_Sans',sans-serif] text-[6px] leading-[8px]">
      <TitleBar />
      <Tabs />
      <Ribbon />
      <div className="h-[16px] shrink-0 border-t border-[#dbe5ce] pl-[4px] leading-[16px] text-[#222]">Modify | Detail Items</div>
      <div className="flex min-h-0 flex-1">
        <ProjectBrowser />
        <DrawingArea />
        <PropertiesPalette />
      </div>
      <StatusBar />
      <TypeProperties />
    </div>
  );
}
